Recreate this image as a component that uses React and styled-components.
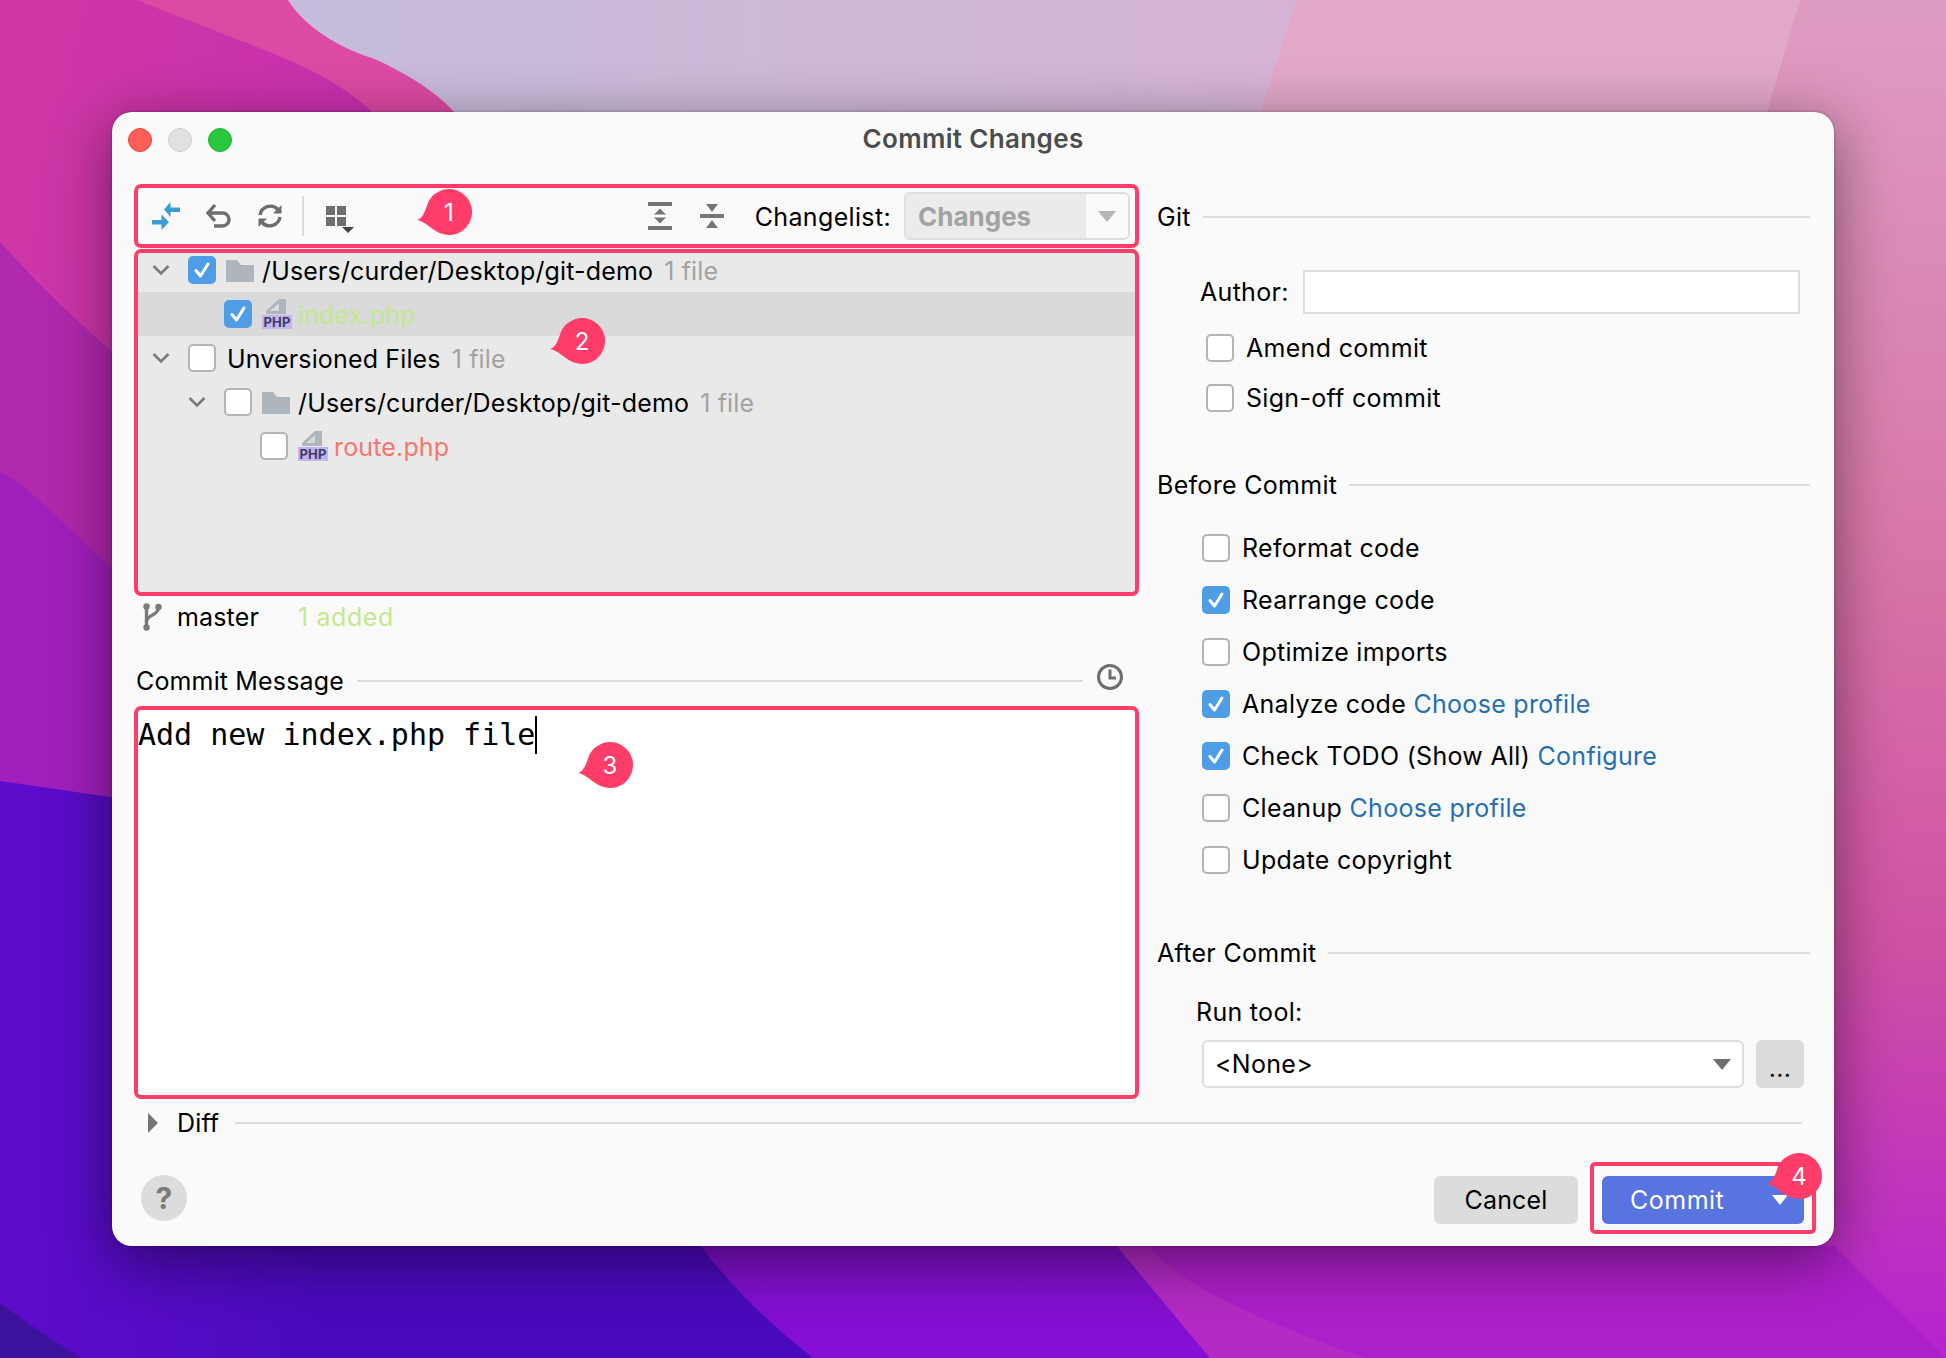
import React from "react";
import styled, { createGlobalStyle } from "styled-components";

const GlobalStyle = createGlobalStyle`
  html, body {
    margin: 0;
    padding: 0;
    width: 1946px;
    height: 1358px;
    overflow: hidden;
    font-family: Inter, "Liberation Sans", sans-serif;
    color: #000;
  }
`;

const PINK = "#ff3d68";

const Desktop = styled.div`
  position: relative;
  width: 1946px;
  height: 1358px;
  padding: 112px 112px 112px 112px;
  box-sizing: border-box;
  overflow: hidden;
`;

const WallpaperSvg = styled.svg`
  position: absolute;
  inset: 0;
`;

const Window = styled.div`
  position: relative;
  width: 1722px;
  height: 1134px;
  box-sizing: border-box;
  padding: 0 22px;
  background: #fafafa;
  border-radius: 20px;
  box-shadow: 0 14px 60px rgba(0, 0, 0, 0.48), 0 0 3px rgba(0, 0, 0, 0.3);
  display: flex;
  flex-direction: column;
  font-size: 25px;
  letter-spacing: 0.15px;
`;

const TitleBar = styled.div`
  height: 72px;
  margin: 0 -22px;
  padding: 0 16px 18px 16px;
  box-sizing: border-box;
  display: grid;
  grid-template-columns: 1fr auto 1fr;
  align-items: center;
`;

const Lights = styled.div`
  display: flex;
  gap: 16px;
  margin-top: 2px;
`;

const Light = styled.span`
  width: 24px;
  height: 24px;
  border-radius: 50%;
  box-sizing: border-box;
  background: ${(p) => p.$color};
  border: 1px solid ${(p) => p.$edge};
`;

const Title = styled.div`
  font-size: 26px;
  font-weight: 600;
  letter-spacing: 0.35px;
  color: #4c4c4c;
  padding-bottom: 2px;
`;

const Columns = styled.div`
  display: flex;
  gap: 18px;
`;

const LeftColumn = styled.div`
  width: 1005px;
  display: flex;
  flex-direction: column;
`;

const RightColumn = styled.div`
  width: 653px;
  padding-top: 16px;
  display: flex;
  flex-direction: column;
  letter-spacing: 0.3px;
`;

const Toolbar = styled.div`
  position: relative;
  height: 64px;
  box-sizing: border-box;
  border: 4px solid ${PINK};
  border-radius: 7px;
  padding: 0 5px 0 2px;
  display: flex;
  align-items: center;
`;

const ToolSlot = styled.div`
  width: 52px;
  display: flex;
  justify-content: center;
  align-items: center;
`;

const ToolSeparator = styled.div`
  width: 2px;
  height: 40px;
  margin: 0 10px 0 6px;
  background: #dcdcdc;
`;

const Spacer = styled.div`
  flex: 1;
`;

const ChangelistLabel = styled.span`
  margin: 2px 13px 0 17px;
  letter-spacing: 0.35px;
`;

const ChangelistCombo = styled.div`
  width: 226px;
  height: 48px;
  box-sizing: border-box;
  border: 2px solid #dedede;
  border-radius: 6px;
  display: flex;
  overflow: hidden;
`;

const ChangelistValue = styled.div`
  flex: 1;
  background: #ebebeb;
  color: #a2a2a2;
  font-size: 26px;
  font-weight: 700;
  letter-spacing: 0;
  padding-left: 12px;
  display: flex;
  align-items: center;
`;

const ChangelistArrow = styled.div`
  width: 42px;
  display: flex;
  align-items: center;
  justify-content: center;
`;

const Tree = styled.div`
  position: relative;
  margin-top: 1px;
  height: 347px;
  box-sizing: border-box;
  border: 4px solid ${PINK};
  border-radius: 7px;
  background: #e9e9e9;
`;

const TreeClip = styled.div`
  height: 100%;
  overflow: hidden;
`;

const TreeList = styled.div`
  margin-top: -5px;
`;

const TreeRow = styled.div`
  height: 44px;
  box-sizing: border-box;
  padding-left: ${(p) => 14 + p.$depth * 36}px;
  display: flex;
  align-items: center;
  background: ${(p) => (p.$selected ? "#dadada" : "transparent")};
`;

const ChevronSlot = styled.div`
  width: 36px;
  flex: none;
  display: flex;
  align-items: center;
`;

const Box = styled.span`
  width: 28px;
  height: 28px;
  flex: none;
  box-sizing: border-box;
  border-radius: 5px;
  display: inline-flex;
  align-items: center;
  justify-content: center;
  background: ${(p) => (p.$checked ? "#4f9de6" : "#fff")};
  border: 2px solid ${(p) => (p.$checked ? "#4f9de6" : "#b4b4b4")};
`;

const RowIcon = styled.span`
  margin-left: 10px;
  flex: none;
  display: inline-flex;
`;

const RowLabel = styled.span`
  margin-left: ${(p) => p.$gap}px;
  padding-top: 2px;
  color: ${(p) => p.$color || "#000"};
  white-space: nowrap;
`;

const RowCount = styled.span`
  margin-left: 11px;
  padding-top: 2px;
  color: #a2a2a2;
  white-space: nowrap;
`;

const PhpWrap = styled.span`
  position: relative;
  width: 30px;
  height: 30px;
  display: block;
`;

const PhpTag = styled.span`
  position: absolute;
  left: 0;
  bottom: 0;
  width: 30px;
  height: 14px;
  background: #c3b4ee;
  color: #3d3b66;
  font-size: 13px;
  font-weight: 700;
  line-height: 14px;
  letter-spacing: 0.2px;
  text-align: center;
`;

const StatusRow = styled.div`
  height: 42px;
  padding-left: 8px;
  display: flex;
  align-items: center;
`;

const BranchName = styled.span`
  margin-left: 15px;
  width: 121px;
`;

const AddedCount = styled.span`
  color: #c3e88d;
  letter-spacing: 0.6px;
`;

const MessageHead = styled.div`
  height: 42px;
  margin-top: 22px;
  padding-left: 2px;
  display: flex;
  align-items: center;
  gap: 13px;
`;

const Rule = styled.div`
  flex: 1;
  height: 2px;
  background: #dcdcdc;
`;

const HeadIcon = styled.span`
  display: inline-flex;
  margin: -8px 15px 0 0;
`;

const MessageBox = styled.div`
  position: relative;
  height: 393px;
  margin-top: 4px;
  box-sizing: border-box;
  border: 4px solid ${PINK};
  border-radius: 7px;
  background: #fff;
  padding: 6px 0 0 0;
`;

const MessageText = styled.div`
  font-family: "DejaVu Sans Mono", "Liberation Mono", monospace;
  font-size: 30px;
  letter-spacing: 0;
  line-height: 38px;
  white-space: pre;
  display: flex;
  align-items: center;
`;

const Caret = styled.span`
  width: 2px;
  height: 38px;
  background: #000;
`;

const SectionHead = styled.div`
  height: 34px;
  margin-top: ${(p) => p.$top}px;
  display: flex;
  align-items: center;
  gap: 12px;
`;

const AuthorRow = styled.div`
  margin: 36px 10px 0 43px;
  display: flex;
  align-items: center;
  gap: 14px;
`;

const AuthorInput = styled.div`
  flex: 1;
  height: 44px;
  box-sizing: border-box;
  background: #fff;
  border: 2px solid #dedede;
`;

const CheckRow = styled.div`
  margin-top: ${(p) => p.$top}px;
  padding-left: ${(p) => p.$left}px;
  height: 28px;
  display: flex;
  align-items: center;
  gap: 12px;
  white-space: nowrap;
`;

const LinkText = styled.span`
  color: #2470b3;
`;

const RunLabel = styled.div`
  height: 34px;
  margin-top: 25px;
  padding-left: 39px;
  line-height: 34px;
`;

const RunRow = styled.div`
  margin: 11px 6px 0 45px;
  display: flex;
  gap: 12px;
`;

const RunSelect = styled.div`
  flex: 1;
  height: 48px;
  box-sizing: border-box;
  background: #fff;
  border: 2px solid #dedede;
  border-radius: 6px;
  padding: 0 11px 0 11px;
  display: flex;
  align-items: center;
  justify-content: space-between;
`;

const MoreButton = styled.div`
  width: 48px;
  height: 48px;
  border-radius: 6px;
  background: #dcdcdc;
  display: flex;
  align-items: center;
  justify-content: center;
  padding-top: 8px;
  box-sizing: border-box;
`;

const DiffRow = styled.div`
  height: 48px;
  padding: 0 10px 0 13px;
  display: flex;
  align-items: center;
`;

const DiffLabel = styled.span`
  margin: 0 16px 0 18px;
`;

const Footer = styled.div`
  padding: 15px 0 12px 7px;
  display: flex;
  align-items: center;
  justify-content: space-between;
`;

const HelpButton = styled.div`
  width: 46px;
  height: 46px;
  border-radius: 50%;
  background: #dcdcdc;
  color: #7a7a7a;
  font-size: 30px;
  font-weight: 700;
  display: flex;
  align-items: center;
  justify-content: center;
`;

const FooterActions = styled.div`
  display: flex;
  align-items: center;
  margin-right: -4px;
`;

const CancelButton = styled.div`
  width: 144px;
  height: 48px;
  margin: 4px 12px 0 0;
  border-radius: 6px;
  background: #dcdcdc;
  display: flex;
  align-items: center;
  justify-content: center;
`;

const CommitFrame = styled.div`
  position: relative;
  border: 4px solid ${PINK};
  border-radius: 5px;
  padding: 10px 8px 6px 8px;
`;

const CommitButton = styled.div`
  width: 202px;
  height: 48px;
  box-sizing: border-box;
  border-radius: 6px;
  background: #5774e0;
  color: #fff;
  letter-spacing: 0.5px;
  padding: 0 16px 0 28px;
  display: flex;
  align-items: center;
  justify-content: space-between;
`;

const BadgeWrap = styled.div`
  position: absolute;
  left: ${(p) => p.$left}px;
  top: ${(p) => p.$top}px;
  width: 58px;
  height: 50px;
`;

const BadgeNumber = styled.span`
  position: absolute;
  left: 11px;
  top: 1px;
  width: 46px;
  height: 46px;
  color: #fff;
  font-size: 24px;
  letter-spacing: 0;
  display: flex;
  align-items: center;
  justify-content: center;
`;

const Badge = ({ n, left, top }) => (
  <BadgeWrap $left={left} $top={top}>
    <svg width="58" height="50" viewBox="0 0 58 50">
      <path
        d="M2 32C7 31 10 24 12.5 16A23 23 0 1 1 26 45.6C18 43 10 33 2 32Z"
        fill={PINK}
      />
    </svg>
    <BadgeNumber>{n}</BadgeNumber>
  </BadgeWrap>
);

const Wallpaper = () => (
  <WallpaperSvg width="1946" height="1358" viewBox="0 0 1946 1358">
    <defs>
      <linearGradient id="side" x1="0" y1="0" x2="0" y2="1">
        <stop offset="0" stopColor="#de9cc2" />
        <stop offset="0.4" stopColor="#d877a8" />
        <stop offset="0.7" stopColor="#cf50a4" />
        <stop offset="1" stopColor="#b522cf" />
      </linearGradient>
      <linearGradient id="lav" x1="0" y1="0" x2="1" y2="0">
        <stop offset="0" stopColor="#c4bcdd" />
        <stop offset="0.5" stopColor="#cdb9d8" />
        <stop offset="1" stopColor="#d6b3d6" />
      </linearGradient>
      <linearGradient id="mag" x1="0" y1="0" x2="1" y2="0.3">
        <stop offset="0" stopColor="#cf38a4" />
        <stop offset="1" stopColor="#c82fae" />
      </linearGradient>
      <linearGradient id="purple" x1="0" y1="0" x2="0" y2="1">
        <stop offset="0" stopColor="#7a10c4" />
        <stop offset="1" stopColor="#860fd6" />
      </linearGradient>
      <linearGradient id="blue" gradientUnits="userSpaceOnUse" x1="0" y1="0" x2="320" y2="0">
        <stop offset="0" stopColor="#5e0ccb" />
        <stop offset="1" stopColor="#4a0abc" />
      </linearGradient>
    </defs>
    <rect width="1946" height="1358" fill="url(#side)" />
    <path d="M1297 0H1800L1762 130H1255Z" fill="#e2a8c8" />
    <path d="M200 0H1297L1255 130H200Z" fill="url(#lav)" />
    <path d="M137 0H288C300 20 330 45 372 58C400 70 435 90 454 112V400H137Z" fill="#dc4aa4" />
    <path d="M0 0H137C190 22 270 50 310 70C340 85 360 100 372 112V500H0Z" fill="url(#mag)" />
    <path d="M0 242C40 285 90 340 200 420V700H0Z" fill="#b028ac" />
    <path d="M0 472C40 490 90 560 200 640V900H0Z" fill="#a01fbc" />
    <path d="M150 1200H1117V1246L1210 1358H150Z" fill="url(#purple)" />
    <path d="M0 781L200 810V1200H672C695 1246 745 1305 813 1358H0Z" fill="url(#blue)" />
    <path d="M0 1303C30 1325 60 1345 81 1358H0Z" fill="#3d139e" />
    <path d="M1117 1246L1210 1358H1946L1834 1246Z" fill="#b32ac4" />
    <path d="M1148 1246C1180 1290 1300 1335 1365 1358H1946L1834 1246Z" fill="#ad1fc8" />
  </WallpaperSvg>
);

const Check = () => (
  <svg width="18" height="18" viewBox="0 0 18 18">
    <path
      d="M3 9.5L7.5 15L15 3"
      fill="none"
      stroke="#fff"
      strokeWidth="3"
      strokeLinecap="round"
      strokeLinejoin="round"
    />
  </svg>
);

const CheckBox = ({ checked }) => (
  <Box $checked={checked}>{checked && <Check />}</Box>
);

const Chevron = () => (
  <svg width="18" height="12" viewBox="0 0 18 12">
    <path d="M1.5 2L9 9.5L16.5 2" fill="none" stroke="#7b7b7b" strokeWidth="2.6" />
  </svg>
);

const FolderIcon = () => (
  <svg width="28" height="24" viewBox="0 0 28 24">
    <path d="M0 2H11L15 7H28V24H0Z" fill="#acb6bc" />
  </svg>
);

const PhpIcon = () => (
  <PhpWrap>
    <svg width="30" height="30" viewBox="0 0 30 30">
      <path d="M17 0H24V15H4V12Z" fill="#acb6bc" />
      <path d="M17 4V12H8Z" fill="#d6dadd" />
    </svg>
    <PhpTag>PHP</PhpTag>
  </PhpWrap>
);

const DiffIcon = () => (
  <svg width="28" height="28" viewBox="0 0 28 28" fill="#389fd6">
    <path d="M12 7.5L18.5 0V5.5H28V10H18.5V15Z" />
    <path d="M17 20L9.5 28V22.5H0V18H9.5V12.5Z" />
  </svg>
);

const UndoIcon = () => (
  <svg width="26" height="26" viewBox="0 0 26 26" fill="none" stroke="#6e6e6e" strokeWidth="3.4">
    <path d="M3 10H17.5A6.5 6.5 0 0 1 17.5 23H9" />
    <path d="M10 2L3 10L10 18" />
  </svg>
);

const RefreshIcon = () => (
  <svg width="26" height="26" viewBox="0 0 26 26" fill="none" stroke="#6e6e6e" strokeWidth="3.4">
    <path d="M3 12A10.5 10.5 0 0 1 21 6.5" />
    <path d="M23 14A10.5 10.5 0 0 1 5 19.5" />
    <path d="M24.5 2V10.5H16Z" fill="#6e6e6e" stroke="none" />
    <path d="M1.5 24V15.5H10Z" fill="#6e6e6e" stroke="none" />
  </svg>
);

const GroupIcon = () => (
  <svg width="30" height="34" viewBox="0 0 30 34" fill="#6e6e6e">
    <rect x="1" y="7" width="9" height="9" />
    <rect x="12" y="7" width="9" height="9" />
    <rect x="1" y="18" width="9" height="9" />
    <rect x="12" y="18" width="9" height="9" />
    <path d="M17 28H29L23 34Z" fill="#444" />
  </svg>
);

const ExpandIcon = () => (
  <svg width="24" height="28" viewBox="0 0 24 28" fill="#757575">
    <rect width="24" height="4" />
    <rect y="24" width="24" height="4" />
    <path d="M12 6.5L18 12.5H6Z" />
    <path d="M12 21.5L18 15.5H6Z" />
  </svg>
);

const CollapseIcon = () => (
  <svg width="24" height="26" viewBox="0 0 24 26" fill="#757575">
    <rect y="11" width="24" height="4" />
    <path d="M12 9L6 1H18Z" />
    <path d="M12 17L18 25H6Z" />
  </svg>
);

const Triangle = ({ color, w = 18, h = 11 }) => (
  <svg width={w} height={h} viewBox="0 0 18 11">
    <path d="M0 0H18L9 11Z" fill={color} />
  </svg>
);

const BranchIcon = () => (
  <svg width="20" height="28" viewBox="0 0 20 28" fill="none" stroke="#7a7a7a" strokeWidth="3.4">
    <path d="M4.5 4V24" />
    <path d="M16.5 5C16.5 12 5 12 4.5 18" />
    <circle cx="4.5" cy="3.5" r="3.2" fill="#7a7a7a" stroke="none" />
    <circle cx="16.5" cy="4" r="3.2" fill="#7a7a7a" stroke="none" />
    <circle cx="4.5" cy="24.5" r="3.2" fill="#7a7a7a" stroke="none" />
  </svg>
);

const ClockIcon = () => (
  <svg width="28" height="28" viewBox="0 0 28 28" fill="none" stroke="#6e6e6e" strokeWidth="3">
    <circle cx="14" cy="14" r="11.5" />
    <path d="M14 6.5V15H20" />
  </svg>
);

const BEFORE_COMMIT = [
  { label: "Reformat code" },
  { label: "Rearrange code", checked: true },
  { label: "Optimize imports" },
  { label: "Analyze code", checked: true, link: "Choose profile" },
  { label: "Check TODO (Show All)", checked: true, link: "Configure" },
  { label: "Cleanup", link: "Choose profile" },
  { label: "Update copyright" },
];

const App = () => (
  <Desktop>
    <GlobalStyle />
    <Wallpaper />
    <Window>
      <TitleBar>
        <Lights>
          <Light $color="#ff5f57" $edge="#e5483f" />
          <Light $color="#e2e2e2" $edge="#cfcfcf" />
          <Light $color="#28c83f" $edge="#22b236" />
        </Lights>
        <Title>Commit Changes</Title>
      </TitleBar>
      <Columns>
        <LeftColumn>
          <Toolbar>
            <ToolSlot><DiffIcon /></ToolSlot>
            <ToolSlot><UndoIcon /></ToolSlot>
            <ToolSlot><RefreshIcon /></ToolSlot>
            <ToolSeparator />
            <ToolSlot><GroupIcon /></ToolSlot>
            <Badge n="1" left={277} top={0} />
            <Spacer />
            <ToolSlot><ExpandIcon /></ToolSlot>
            <ToolSlot><CollapseIcon /></ToolSlot>
            <ChangelistLabel>Changelist:</ChangelistLabel>
            <ChangelistCombo>
              <ChangelistValue>Changes</ChangelistValue>
              <ChangelistArrow><Triangle color="#b5b5b5" /></ChangelistArrow>
            </ChangelistCombo>
          </Toolbar>
          <Tree>
            <TreeClip>
              <TreeList>
                <TreeRow $depth={0}>
                  <ChevronSlot><Chevron /></ChevronSlot>
                  <CheckBox checked />
                  <RowIcon><FolderIcon /></RowIcon>
                  <RowLabel $gap={8}>/Users/curder/Desktop/git-demo</RowLabel>
                  <RowCount>1 file</RowCount>
                </TreeRow>
                <TreeRow $depth={1} $selected>
                  <ChevronSlot />
                  <CheckBox checked />
                  <RowIcon><PhpIcon /></RowIcon>
                  <RowLabel $gap={6} $color="#c3e88d">index.php</RowLabel>
                </TreeRow>
                <TreeRow $depth={0}>
                  <ChevronSlot><Chevron /></ChevronSlot>
                  <CheckBox />
                  <RowLabel $gap={11}>Unversioned Files</RowLabel>
                  <RowCount>1 file</RowCount>
                </TreeRow>
                <TreeRow $depth={1}>
                  <ChevronSlot><Chevron /></ChevronSlot>
                  <CheckBox />
                  <RowIcon><FolderIcon /></RowIcon>
                  <RowLabel $gap={8}>/Users/curder/Desktop/git-demo</RowLabel>
                  <RowCount>1 file</RowCount>
                </TreeRow>
                <TreeRow $depth={2}>
                  <ChevronSlot />
                  <CheckBox />
                  <RowIcon><PhpIcon /></RowIcon>
                  <RowLabel $gap={6} $color="#f8756c">route.php</RowLabel>
                </TreeRow>
              </TreeList>
            </TreeClip>
            <Badge n="2" left={410} top={64} />
          </Tree>
          <StatusRow>
            <BranchIcon />
            <BranchName>master</BranchName>
            <AddedCount>1 added</AddedCount>
          </StatusRow>
          <MessageHead>
            <span>Commit Message</span>
            <Rule />
            <HeadIcon><ClockIcon /></HeadIcon>
          </MessageHead>
          <MessageBox>
            <MessageText>
              Add new index.php file
              <Caret />
            </MessageText>
            <Badge n="3" left={438} top={31} />
          </MessageBox>
        </LeftColumn>
        <RightColumn>
          <SectionHead $top={0}>
            <span>Git</span>
            <Rule />
          </SectionHead>
          <AuthorRow>
            <span>Author:</span>
            <AuthorInput />
          </AuthorRow>
          <CheckRow $top={20} $left={49}>
            <CheckBox />
            <span>Amend commit</span>
          </CheckRow>
          <CheckRow $top={22} $left={49}>
            <CheckBox />
            <span>Sign-off commit</span>
          </CheckRow>
          <SectionHead $top={56}>
            <span>Before Commit</span>
            <Rule />
          </SectionHead>
          {BEFORE_COMMIT.map((item, i) => (
            <CheckRow key={item.label} $top={i === 0 ? 32 : 24} $left={45}>
              <CheckBox checked={item.checked} />
              <span>
                {item.label}
                {item.link && <LinkText> {item.link}</LinkText>}
              </span>
            </CheckRow>
          ))}
          <SectionHead $top={62}>
            <span>After Commit</span>
            <Rule />
          </SectionHead>
          <RunLabel>Run tool:</RunLabel>
          <RunRow>
            <RunSelect>
              <span>&lt;None&gt;</span>
              <Triangle color="#6e6e6e" />
            </RunSelect>
            <MoreButton>...</MoreButton>
          </RunRow>
        </RightColumn>
      </Columns>
      <DiffRow>
        <svg width="12" height="20" viewBox="0 0 12 20">
          <path d="M1 0L11 10L1 20Z" fill="#757575" />
        </svg>
        <DiffLabel>Diff</DiffLabel>
        <Rule />
      </DiffRow>
      <Footer>
        <HelpButton>?</HelpButton>
        <FooterActions>
          <CancelButton>Cancel</CancelButton>
          <CommitFrame>
            <CommitButton>
              <span>Commit</span>
              <Triangle color="#fff" w={16} h={10} />
            </CommitButton>
            <Badge n="4" left={171} top={-14} />
          </CommitFrame>
        </FooterActions>
      </Footer>
    </Window>
  </Desktop>
);

export default App;
